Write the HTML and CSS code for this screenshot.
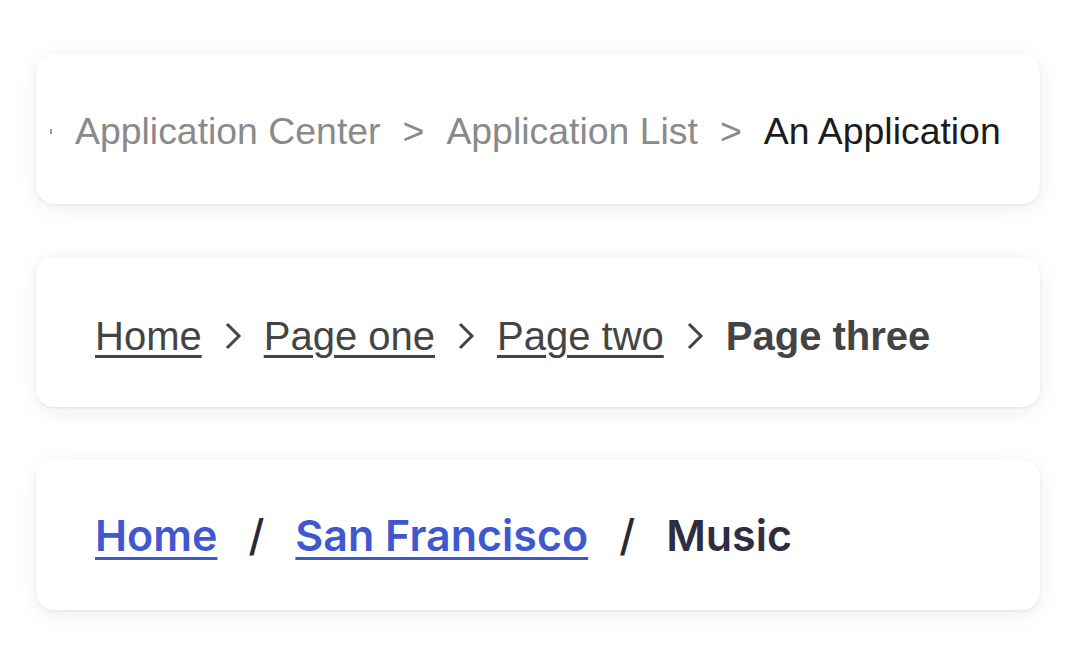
FILE: index.html
```html
<!DOCTYPE html>
<html lang="en">
<head>
  <meta charset="UTF-8">
  <meta name="viewport" content="width=device-width, initial-scale=1.0">
  <title>Breadcrumbs</title>
  <link rel="stylesheet" href="styles.css">
</head>
<body>
  <div class="stack">
    <!-- plain text crumbs -->
    <nav class="card crumbs-plain">
      <span class="edge-mark"></span>
      <span class="crumb">Application Center</span>
      <span class="sep">&gt;</span>
      <span class="crumb">Application List</span>
      <span class="sep">&gt;</span>
      <span class="crumb current">An Application</span>
    </nav>

    <!-- underlined links with chevrons -->
    <nav class="card crumbs-chevron">
      <a href="#">Home</a>
      <svg class="chevron" viewBox="0 0 18 28"><path d="M3 2 L15 14 L3 26" /></svg>
      <a href="#">Page one</a>
      <svg class="chevron" viewBox="0 0 18 28"><path d="M3 2 L15 14 L3 26" /></svg>
      <a href="#">Page two</a>
      <svg class="chevron" viewBox="0 0 18 28"><path d="M3 2 L15 14 L3 26" /></svg>
      <span class="current">Page three</span>
    </nav>

    <!-- blue links with slashes -->
    <nav class="card crumbs-slash">
      <a href="#">Home</a>
      <span class="sep">/</span>
      <a href="#">San Francisco</a>
      <span class="sep">/</span>
      <span class="current">Music</span>
    </nav>
  </div>
</body>
</html>
```

FILE: styles.css
```css
body {
  margin: 0;
  background-color: #ffffff;
  font-family: "Liberation Sans", Arial, sans-serif;
}

.stack {
  display: flex;
  flex-direction: column;
  gap: 53px;
  padding: 54px 40px 40px 36px;
}

.card {
  height: 150px;
  box-sizing: border-box;
  background-color: #fff;
  border-radius: 18px;
  box-shadow: 0 4px 22px rgba(0, 0, 0, 0.07), 0 1px 3px rgba(0, 0, 0, 0.07);
  display: flex;
  align-items: center;
}

/* first card */
.crumbs-plain {
  padding-left: 14px;
  gap: 22px;
  font-size: 37.4px;
  color: #8a8a8a;
  padding-top: 4px;
}

.crumbs-plain .edge-mark {
  width: 2px;
  height: 5px;
  background-color: #9a9a9a;
  margin-right: 1px;
}

.crumbs-plain .current {
  color: #1c1c1c;
}

/* second card */
.crumbs-chevron {
  padding-left: 59px;
  gap: 22px;
  font-size: 40px;
  color: #444;
  padding-top: 8px;
}

.crumbs-chevron a {
  color: #444;
  text-decoration: underline;
  text-decoration-thickness: 3px;
  text-underline-offset: 5px;
}

.crumbs-chevron .chevron {
  width: 18px;
  height: 28px;
  margin-top: -1px;
}

.crumbs-chevron .chevron path {
  fill: none;
  stroke: #444;
  stroke-width: 3;
}

.crumbs-chevron .current {
  font-weight: bold;
}

/* third card */
.crumbs-slash {
  padding-left: 59px;
  gap: 31px;
  font-family: Inter, "Noto Sans", sans-serif;
  font-weight: 600;
  font-size: 43px;
  color: #2e2e40;
}

.crumbs-slash a {
  color: #3f58d0;
  text-decoration: underline;
  text-decoration-thickness: 3px;
  text-underline-offset: 6px;
}

.crumbs-slash .sep {
  color: #2a2a36;
  font-weight: 500;
}
```
